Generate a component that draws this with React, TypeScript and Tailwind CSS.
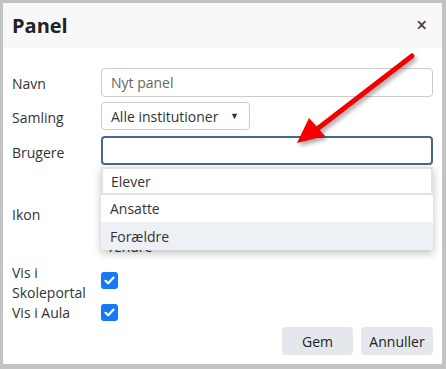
const FONT = { fontFamily: '"Open Sans", "Noto Sans", sans-serif' };

function Check() {
  return (
    <div className="w-[17px] h-[17px] rounded-[3px] bg-[#1877f2] flex items-center justify-center">
      <svg width="11" height="9" viewBox="0 0 11 9">
        <path d="M1.5 4.8 L4.2 7.3 L9.5 1.6" fill="none" stroke="#fff" strokeWidth="2.2" strokeLinecap="round" strokeLinejoin="round" />
      </svg>
    </div>
  );
}

function Arrow() {
  return (
    <svg className="absolute left-0 top-0 pointer-events-none" width="446" height="369">
      <defs>
        <filter id="sh" x="-20%" y="-20%" width="140%" height="140%">
          <feGaussianBlur stdDeviation="2" />
        </filter>
      </defs>
      <g transform="translate(2,3)" opacity="0.35" filter="url(#sh)">
        <line x1="412" y1="56" x2="312" y2="133" stroke="#000" strokeWidth="5" strokeLinecap="round" />
        <polygon points="297,143 309,118 325,136" fill="#000" />
      </g>
      <line x1="412" y1="56" x2="312" y2="133" stroke="#f40000" strokeWidth="5" strokeLinecap="round" />
      <polygon points="297,143 309,118 325,136" fill="#f40000" />
    </svg>
  );
}

export default function App() {
  return (
    <div className="relative w-[446px] h-[369px] bg-[#c3c3c3] pl-[3px] pt-[3px] pr-[4px] pb-[5px]" style={FONT}>
      <div className="w-full h-full bg-white flex flex-col text-[14px] text-[#333]">
        <div className="h-[45px] bg-[#f8f8f8] flex items-center justify-between pl-[9px] pr-[15px]">
          <h1 className="text-[20px] font-bold text-[#222]">Panel</h1>
          <span className="text-[19px] font-semibold text-[#444] leading-none">×</span>
        </div>
        <div className="flex flex-col px-[9px] pt-[20px]">
          <div className="flex items-center h-[29px]">
            <div className="w-[89px] mt-[2px]">Navn</div>
            <div className="flex-1 h-full border border-[#ccc] rounded-[4px] flex items-center px-[9px] text-[#666]">Nyt panel</div>
          </div>
          <div className="flex items-center h-[28px] mt-[5px]">
            <div className="w-[89px] mt-[2px]">Samling</div>
            <div className="w-[149px] h-full border border-[#ccc] rounded-[4px] flex items-center justify-between pl-[9px] pr-[10px]">
              <span>Alle institutioner</span>
              <span className="text-[9px] text-[#333]">▼</span>
            </div>
          </div>
          <div className="relative flex items-center h-[29px] mt-[6px]">
            <div className="w-[89px] mt-[3px]">Brugere</div>
            <div className="flex-1 h-full border-2 border-[#47678c] rounded-[4px]" />
            <div className="absolute left-[89px] right-0 top-[31px] bg-white shadow-[0_3px_8px_rgba(0,0,0,0.25)] z-10 flex flex-col">
              <div className="h-[28px] flex items-center px-[8px] border-2 border-[#e2e2e2]">Elever</div>
              <div className="h-[27px] flex items-center px-[9px]">Ansatte</div>
              <div className="h-[28px] flex items-center px-[9px] bg-[#edf1f5]">Forældre</div>
            </div>
          </div>
          <div className="flex items-center h-[96px]">
            <div className="w-[89px] mt-[2px]">Ikon</div>
            <div className="flex flex-col items-center w-[60px] mt-[66px]">
              <span className="text-[#333]">Ændre</span>
            </div>
          </div>
          <div className="flex items-center">
            <div className="w-[89px] leading-[20px] mt-[2px]">Vis i<br />Skoleportal</div>
            <div className="-mt-[4px]"><Check /></div>
          </div>
          <div className="flex items-center -mt-[1px] h-[20px]">
            <div className="w-[89px]">Vis i Aula</div>
            <Check />
          </div>
          <div className="flex justify-end gap-[8px] mt-[5px]">
            <button className="w-[71px] h-[28px] rounded-[4px] bg-[#e4e7ec] text-[#222]">Gem</button>
            <button className="w-[72px] h-[28px] rounded-[4px] bg-[#e4e7ec] text-[#222]">Annuller</button>
          </div>
        </div>
      </div>
      <Arrow />
    </div>
  );
}
